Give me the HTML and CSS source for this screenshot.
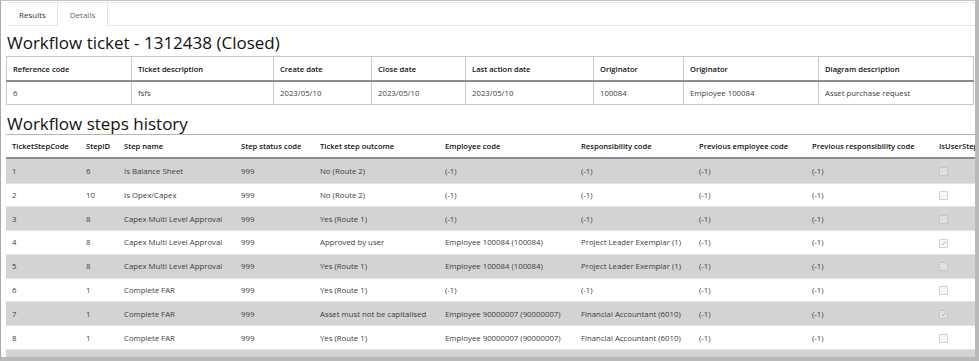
FILE: index.html
```html
<!DOCTYPE html>
<html>
<head>
<meta charset="utf-8">
<link rel="stylesheet" href="styles.css">
</head>
<body>
<div class="frame">
  <div class="tabs">
    <span class="tab">Results</span>
    <span class="tab active">Details</span>
    <span class="tab-fill"></span>
  </div>
  <h1 class="title">Workflow ticket - 1312438 (Closed)</h1>
  <table class="grid ticket">
    <colgroup>
      <col style="width:125px"><col style="width:142px"><col style="width:98px"><col style="width:94px"><col style="width:128px"><col style="width:90px"><col style="width:135px"><col>
    </colgroup>
    <thead>
      <tr><th>Reference code</th><th>Ticket description</th><th>Create date</th><th>Close date</th><th>Last action date</th><th>Originator</th><th>Originator</th><th>Diagram description</th></tr>
    </thead>
    <tbody>
      <tr><td>6</td><td>fsfs</td><td>2023/05/10</td><td>2023/05/10</td><td>2023/05/10</td><td>100084</td><td>Employee 100084</td><td>Asset purchase request</td></tr>
    </tbody>
  </table>
  <h1 class="title title2">Workflow steps history</h1>
  <table class="grid steps">
    <colgroup>
      <col style="width:74px"><col style="width:38px"><col style="width:117px"><col style="width:79px"><col style="width:125px"><col style="width:136px"><col style="width:118px"><col style="width:113px"><col style="width:127px"><col style="width:80px">
    </colgroup>
    <thead>
      <tr><th>TicketStepCode</th><th>StepID</th><th>Step name</th><th>Step status code</th><th>Ticket step outcome</th><th>Employee code</th><th>Responsibility code</th><th>Previous employee code</th><th>Previous responsibility code</th><th>IsUserStep</th></tr>
    </thead>
    <tbody>
      <tr class="odd"><td>1</td><td>6</td><td>Is Balance Sheet</td><td>999</td><td>No (Route 2)</td><td>(-1)</td><td>(-1)</td><td>(-1)</td><td>(-1)</td><td><span class="cb"></span></td></tr>
      <tr><td>2</td><td>10</td><td>Is Opex/Capex</td><td>999</td><td>No (Route 2)</td><td>(-1)</td><td>(-1)</td><td>(-1)</td><td>(-1)</td><td><span class="cb"></span></td></tr>
      <tr class="odd"><td>3</td><td>8</td><td>Capex Multi Level Approval</td><td>999</td><td>Yes (Route 1)</td><td>(-1)</td><td>(-1)</td><td>(-1)</td><td>(-1)</td><td><span class="cb"></span></td></tr>
      <tr><td>4</td><td>8</td><td>Capex Multi Level Approval</td><td>999</td><td>Approved by user</td><td>Employee 100084 (100084)</td><td>Project Leader Exemplar (1)</td><td>(-1)</td><td>(-1)</td><td><span class="cb checked">&#10003;</span></td></tr>
      <tr class="odd"><td>5</td><td>8</td><td>Capex Multi Level Approval</td><td>999</td><td>Yes (Route 1)</td><td>Employee 100084 (100084)</td><td>Project Leader Exemplar (1)</td><td>(-1)</td><td>(-1)</td><td><span class="cb"></span></td></tr>
      <tr><td>6</td><td>1</td><td>Complete FAR</td><td>999</td><td>Yes (Route 1)</td><td>(-1)</td><td>(-1)</td><td>(-1)</td><td>(-1)</td><td><span class="cb"></span></td></tr>
      <tr class="odd"><td>7</td><td>1</td><td>Complete FAR</td><td>999</td><td>Asset must not be capitalised</td><td>Employee 90000007 (90000007)</td><td>Financial Accountant (6010)</td><td>(-1)</td><td>(-1)</td><td><span class="cb checked">&#10003;</span></td></tr>
      <tr><td>8</td><td>1</td><td>Complete FAR</td><td>999</td><td>Yes (Route 1)</td><td>Employee 90000007 (90000007)</td><td>Financial Accountant (6010)</td><td>(-1)</td><td>(-1)</td><td><span class="cb"></span></td></tr>
      <tr class="odd"><td></td><td></td><td></td><td></td><td></td><td></td><td></td><td></td><td></td><td><span class="cb"></span></td></tr>
    </tbody>
  </table>
</div>
</body>
</html>
```
FILE: styles.css
```css
html, body {
  margin: 0;
  padding: 0;
  background: #ffffff;
}
.frame {
  box-sizing: border-box;
  width: 979px;
  height: 361px;
  overflow: hidden;
  border-left: 1px solid #a8a8a8;
  border-top: 1px solid #c4c4c4;
  border-right: 4px solid #b9b9b9;
  border-bottom: 4px solid #b9b9b9;
  font-family: "Open Sans", "Noto Sans", sans-serif;
  color: #000;
}
.tabs {
  display: flex;
  margin: 1px 0 0 7px;
  height: 23px;
  border-top: 1px solid #ececec;
}
.tab {
  display: flex;
  align-items: center;
  justify-content: center;
  width: 49px;
  font-size: 8px;
  color: #333;
  border-bottom: 1px solid #e6e6e6;
}
.tab.active {
  color: #666;
  border-left: 1px solid #e3e3e3;
  border-right: 1px solid #e3e3e3;
  border-bottom: none;
}
.tab-fill {
  flex: 1;
  border-bottom: 1px solid #e6e6e6;
}
.title {
  margin: 6px 0 0 6px;
  font-weight: normal;
  font-size: 17px;
  line-height: 22px;
  color: #111;
}
.title2 {
  margin-top: 8px;
  line-height: 21px;
}
.grid {
  border-collapse: collapse;
  table-layout: fixed;
  margin-left: 5px;
  font-size: 7.8px;
}
.grid th, .grid td {
  text-align: left;
  padding: 0 6px;
  white-space: nowrap;
  overflow: hidden;
}
.grid th {
  font-weight: 600;
  font-size: 7.6px;
  color: #111;
}
.grid td {
  color: #3c3c3c;
}
.ticket {
  width: 968px;
  margin-top: 2px;
  border: 1px solid #c8c8c8;
}
.ticket th, .ticket td {
  border-left: 1px solid #c8c8c8;
}
.ticket th {
  height: 23px;
}
.ticket td {
  height: 22px;
}
.ticket thead th {
  border-bottom: 2px solid #8c8c8c;
}
.steps {
  width: 1007px;
  margin-top: 0;
  border-top: 1px solid #b4b4b4;
}
.steps th {
  height: 22px;
}
.steps thead th {
  border-bottom: 2px solid #8c8c8c;
}
.steps td {
  height: 22.8px;
  border-top: 1px solid #e4e4e4;
}
.steps tbody tr:first-child td {
  border-top: none;
  height: 23.5px;
}
.steps tr.odd td {
  background: #d3d3d3;
}
.cb {
  display: inline-block;
  box-sizing: border-box;
  width: 9px;
  height: 9px;
  border: 1px solid #d0d0d0;
  border-radius: 1px;
  background: #f6f6f6;
  vertical-align: middle;
  font-size: 7px;
  line-height: 7px;
  text-align: center;
  color: #b0b0b0;
}
.odd .cb {
  border-color: #c6c6c6;
  background: #e0e0e0;
}
```
